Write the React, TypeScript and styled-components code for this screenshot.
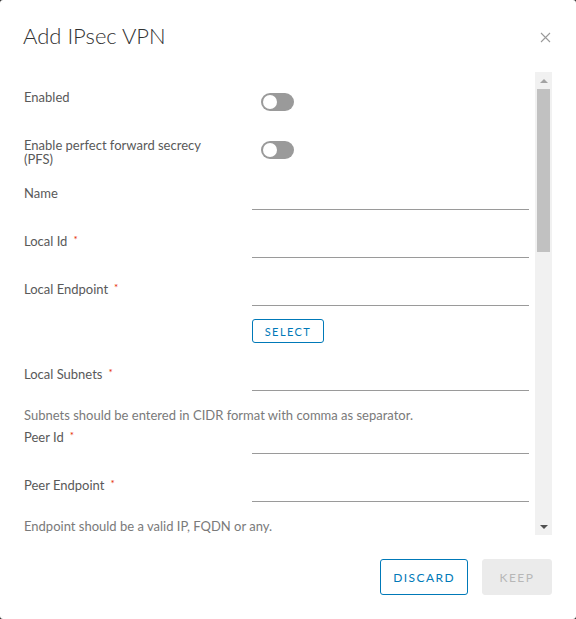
import React from 'react';
import styled, { createGlobalStyle } from 'styled-components';

const GlobalStyle = createGlobalStyle`
  html, body {
    margin: 0;
    padding: 0;
    height: 100%;
    background-color: #2b2b2b;
  }
  * {
    box-sizing: border-box;
  }
  #root {
    height: 100%;
  }
`;

const FONT = `Lato, 'Noto Sans', 'Liberation Sans', sans-serif`;

const StyledBackdrop = styled.div`
  height: 100vh;
  display: flex;
`;

const StyledModal = styled.div`
  flex: 1;
  display: flex;
  flex-direction: column;
  background-color: #ffffff;
  border-radius: 3px;
  font-family: ${FONT};
  overflow: hidden;
`;

const StyledHeader = styled.div`
  height: 72px;
  flex: none;
  display: flex;
  justify-content: space-between;
  align-items: flex-start;
  padding: 20px 24px 0 23px;
`;

const StyledTitle = styled.h3`
  margin: 0;
  font-size: 22px;
  line-height: 32px;
  font-weight: 300;
  color: #313131;
`;

const StyledClose = styled.button`
  border: none;
  background: none;
  padding: 0;
  margin-top: 11px;
  margin-right: 1px;
  width: 12px;
  height: 12px;
  display: flex;
  align-items: center;
  justify-content: center;
  cursor: pointer;
`;

const StyledBody = styled.div`
  flex: 1;
  min-height: 0;
  display: flex;
  margin: 0 24px;
`;

const StyledContent = styled.div`
  flex: 1;
  min-width: 0;
  overflow: hidden;
  padding: 18px 6px 0 0;
  display: flex;
  flex-direction: column;
`;

const StyledRow = styled.div`
  display: flex;
  align-items: flex-start;
  height: 24px;
  flex: none;
  margin-bottom: 24px;
`;

const StyledLabel = styled.label`
  width: 228px;
  flex: none;
  padding-right: 24px;
  font-size: 13px;
  line-height: 14px;
  color: #595959;
`;

const StyledRequired = styled.span`
  color: #e62700;
  font-size: 10px;
  line-height: 10px;
  vertical-align: top;
  margin-left: 6px;
`;

const StyledInput = styled.input`
  flex: 1;
  min-width: 0;
  height: 24px;
  border: none;
  border-bottom: 1px solid #9a9a9a;
  outline: none;
  padding: 0 6px;
  font-family: ${FONT};
  font-size: 13px;
  background: transparent;
`;

const StyledToggle = styled.span`
  position: relative;
  display: block;
  width: 33px;
  height: 18px;
  margin: 3px 0 0 9px;
  border-radius: 9px;
  background-color: #9a9a9a;
  &::after {
    content: '';
    position: absolute;
    top: 2px;
    left: 2px;
    width: 14px;
    height: 14px;
    border-radius: 50%;
    background-color: #ffffff;
  }
`;

const StyledSelectRow = styled.div`
  display: flex;
  padding-left: 228px;
  margin: -11px 0 24px;
  flex: none;
`;

const StyledSmallButton = styled.button`
  height: 24px;
  width: 72px;
  padding: 0;
  border: 1px solid #0079b8;
  border-radius: 3px;
  background: #ffffff;
  color: #0079b8;
  font-family: ${FONT};
  font-size: 11px;
  font-weight: 400;
  letter-spacing: 0.13em;
  cursor: pointer;
`;

const StyledHelper = styled.div`
  font-size: 13px;
  line-height: 18px;
  color: #7a7a7a;
  margin: -9px 0 6px;
  flex: none;
`;

const StyledScrollbar = styled.div`
  width: 17px;
  flex: none;
  display: flex;
  flex-direction: column;
  background-color: #f1f1f1;
`;

type StyledArrowProps = {
  $down?: boolean;
};
const StyledArrow = styled.div<StyledArrowProps>`
  height: 17px;
  flex: none;
  display: flex;
  align-items: center;
  justify-content: center;
  &::before {
    content: '';
    width: 0;
    height: 0;
    border-left: 4px solid transparent;
    border-right: 4px solid transparent;
    ${({ $down }) =>
      $down ? 'border-top: 4px solid #505050;' : 'border-bottom: 4px solid #a3a3a3;'}
  }
`;

const StyledTrack = styled.div`
  flex: 1;
  padding: 0 2px;
`;

const StyledThumb = styled.div`
  background-color: #c1c1c1;
`;

const StyledFooter = styled.div`
  flex: none;
  display: flex;
  justify-content: flex-end;
  gap: 14px;
  padding: 24px;
`;

type StyledButtonProps = {
  $disabled?: boolean;
};
const StyledButton = styled.button<StyledButtonProps>`
  height: 36px;
  min-width: 70px;
  padding: 0 12px;
  border-radius: 3px;
  font-family: ${FONT};
  font-size: 12px;
  font-weight: 400;
  letter-spacing: 0.12em;
  border: 1px solid ${({ $disabled }) => ($disabled ? '#ebebeb' : '#0079b8')};
  background-color: ${({ $disabled }) => ($disabled ? '#ebebeb' : '#ffffff')};
  color: ${({ $disabled }) => ($disabled ? '#b7b7b7' : '#0079b8')};
  cursor: ${({ $disabled }) => ($disabled ? 'not-allowed' : 'pointer')};
`;

type Field = {
  label: string;
  required?: boolean;
  kind: 'toggle' | 'input';
  helper?: string;
  select?: boolean;
};

const fields: Field[] = [
  { label: 'Enabled', kind: 'toggle' },
  { label: 'Enable perfect forward secrecy (PFS)', kind: 'toggle' },
  { label: 'Name', kind: 'input' },
  { label: 'Local Id', kind: 'input', required: true },
  { label: 'Local Endpoint', kind: 'input', required: true, select: true },
  {
    label: 'Local Subnets',
    kind: 'input',
    required: true,
    helper: 'Subnets should be entered in CIDR format with comma as separator.',
  },
  { label: 'Peer Id', kind: 'input', required: true },
  {
    label: 'Peer Endpoint',
    kind: 'input',
    required: true,
    helper: 'Endpoint should be a valid IP, FQDN or any.',
  },
];

const CloseIcon = () => (
  <svg width="11" height="11" viewBox="0 0 11 11">
    <path d="M1 1 L10 10 M10 1 L1 10" stroke="#9a9a9a" strokeWidth="1.1" fill="none" />
  </svg>
);

export const App: React.FC = () => {
  return (
    <>
      <GlobalStyle />
      <StyledBackdrop>
        <StyledModal>
          <StyledHeader>
            <StyledTitle>Add IPsec VPN</StyledTitle>
            <StyledClose type={'button'} aria-label={'Close'}>
              <CloseIcon />
            </StyledClose>
          </StyledHeader>
          <StyledBody>
            <StyledContent>
              {fields.map((field) => (
                <React.Fragment key={field.label}>
                  <StyledRow>
                    <StyledLabel>
                      {field.label}
                      {field.required && <StyledRequired>*</StyledRequired>}
                    </StyledLabel>
                    {field.kind === 'toggle' ? <StyledToggle /> : <StyledInput type={'text'} />}
                  </StyledRow>
                  {field.select && (
                    <StyledSelectRow>
                      <StyledSmallButton type={'button'}>SELECT</StyledSmallButton>
                    </StyledSelectRow>
                  )}
                  {field.helper && <StyledHelper>{field.helper}</StyledHelper>}
                </React.Fragment>
              ))}
            </StyledContent>
            <StyledScrollbar>
              <StyledArrow />
              <StyledTrack>
                <StyledThumb style={{ height: 163 }} />
              </StyledTrack>
              <StyledArrow $down />
            </StyledScrollbar>
          </StyledBody>
          <StyledFooter>
            <StyledButton type={'button'}>DISCARD</StyledButton>
            <StyledButton type={'button'} $disabled>
              KEEP
            </StyledButton>
          </StyledFooter>
        </StyledModal>
      </StyledBackdrop>
    </>
  );
};

export default App;
